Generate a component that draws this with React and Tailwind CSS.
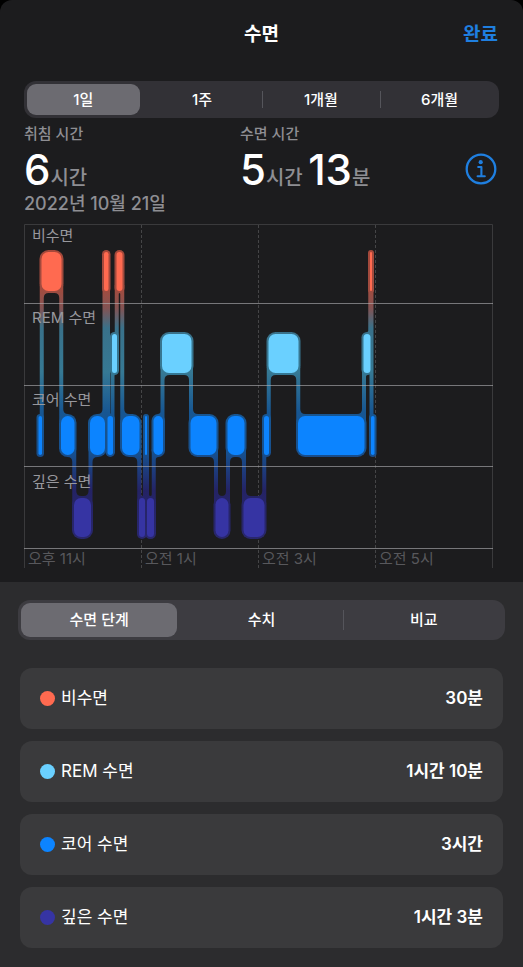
import { useState } from "react";

const ranges = ["1일", "1주", "1개월", "6개월"];
const tabs = ["수면 단계", "수치", "비교"];

const stages = [
  { id: "awake", name: "비수면", total: "30분", color: "#ff6a50", dot: "bg-[#ff6a50]" },
  { id: "rem", name: "REM 수면", total: "1시간 10분", color: "#6ad0ff", dot: "bg-[#6ad0ff]" },
  { id: "core", name: "코어 수면", total: "3시간", color: "#0c84ff", dot: "bg-[#0c84ff]" },
  { id: "deep", name: "깊은 수면", total: "1시간 3분", color: "#3634a3", dot: "bg-[#3634a3]" },
];

// [row, start, end]
const segments = [
  [2, 14.5, 18],
  [0, 17.5, 37.5],
  [2, 37, 50.5],
  [3, 50, 67],
  [2, 66, 81],
  [0, 80, 84.5],
  [2, 83.5, 89],
  [1, 88, 93],
  [0, 92.5, 98.5],
  [2, 98, 115.5],
  [3, 115, 121],
  [2, 121, 123],
  [3, 123, 130],
  [2, 129.5, 139],
  [1, 138, 167.5],
  [2, 166.5, 192.5],
  [3, 191.5, 204.5],
  [2, 203.5, 220.5],
  [3, 219.5, 240.5],
  [2, 240, 245],
  [1, 244.5, 274.5],
  [2, 274, 340.5],
  [1, 339.5, 346.5],
  [0, 346, 348],
  [2, 347, 350.5],
];

const hours = [
  { x: 0, label: "오후 11시" },
  { x: 117, label: "오전 1시" },
  { x: 234, label: "오전 3시" },
  { x: 351, label: "오전 5시" },
];

const ROW = 82;
const BAR = 39;
const EDGE = 2;

const barTop = (row) => 28 + row * ROW;

// Strip between two neighbouring bars, with rounded inner corners at both ends
function connector(a, b) {
  const x = (a[2] + b[1]) / 2;
  const goesDown = b[0] > a[0];
  const upper = goesDown ? a : b;
  const lower = goesDown ? b : a;
  const y1 = barTop(upper[0]) + BAR + EDGE;
  const y2 = barTop(lower[0]) - EDGE;
  const ru = Math.max(0, Math.min(5, (upper[2] - upper[1]) / 2 - EDGE));
  const rl = Math.max(0, Math.min(5, (lower[2] - lower[1]) / 2 - EDGE));
  const s = goesDown ? 1 : -1;
  const inner = x - s * EDGE;
  const outer = x + s * EDGE;

  return [
    `M${inner - s * ru} ${y1 - 1}`,
    `L${inner - s * ru} ${y1}`,
    `Q${inner} ${y1} ${inner} ${y1 + ru}`,
    `L${inner} ${y2 + 8}`,
    `L${outer + s * rl} ${y2 + 8}`,
    `L${outer + s * rl} ${y2}`,
    `Q${outer} ${y2} ${outer} ${y2 - rl}`,
    `L${outer} ${y1 - 8}`,
    `L${inner} ${y1 - 8}Z`,
  ].join(" ");
}

function SegmentedControl({ items, value, onChange, label, className }) {
  const active = items.indexOf(value);

  return (
    <div role="group" aria-label={label} className={`flex rounded-xl ${className}`}>
      {items.map((item, i) => (
        <button
          key={item}
          type="button"
          aria-pressed={value === item}
          onClick={() => onChange(item)}
          className="relative flex flex-1 p-[3px] text-[15px] leading-5 text-white"
        >
          {i > 0 && i !== active && i !== active + 1 && (
            <span className="absolute inset-y-2.5 left-0 w-px bg-[#55555b]" />
          )}
          <span
            className={`flex h-full w-full items-center justify-center rounded-[9px] font-medium ${
              value === item ? "bg-[#6c6b71]" : ""
            }`}
          >
            {item}
          </span>
        </button>
      ))}
    </div>
  );
}

function SleepChart() {
  return (
    <svg viewBox="0 0 475 346" className="block w-full" role="img" aria-label="수면 단계">
      <defs>
        <linearGradient id="edge" gradientUnits="userSpaceOnUse" x1="0" y1="26" x2="0" y2="316">
          <stop offset="0" stopColor="#a5483a" />
          <stop offset="0.14" stopColor="#a04c40" />
          <stop offset="0.2" stopColor="#835353" />
          <stop offset="0.27" stopColor="#39718a" />
          <stop offset="0.42" stopColor="#367994" />
          <stop offset="0.56" stopColor="#175692" />
          <stop offset="0.7" stopColor="#17508e" />
          <stop offset="0.83" stopColor="#242365" />
          <stop offset="1" stopColor="#29276d" />
        </linearGradient>
      </defs>

      {/* Frame and hour lines */}
      <path d="M0.5 344V0.5H468.5V344" fill="none" stroke="#3a3a3c" />
      {hours.slice(1).map((hour) => (
        <line
          key={hour.x}
          x1={hour.x + 0.5}
          x2={hour.x + 0.5}
          y1="1"
          y2="344"
          stroke="#454547"
          strokeDasharray="3 2"
        />
      ))}

      {/* Outlines and connectors */}
      <g fill="url(#edge)">
        {segments.map((seg, i) => (
          <rect
            key={i}
            x={seg[1] - EDGE}
            y={barTop(seg[0]) - EDGE}
            width={seg[2] - seg[1] + EDGE * 2}
            height={BAR + EDGE * 2}
            rx={Math.min(9, (seg[2] - seg[1]) / 2 + EDGE)}
          />
        ))}
        {segments.slice(1).map((seg, i) => (
          <path key={i} d={connector(segments[i], seg)} />
        ))}
      </g>

      {/* Bars */}
      {segments.map((seg, i) => (
        <rect
          key={i}
          x={seg[1]}
          y={barTop(seg[0])}
          width={seg[2] - seg[1]}
          height={BAR}
          rx={Math.min(7, (seg[2] - seg[1]) / 2)}
          fill={stages[seg[0]].color}
        />
      ))}

      {/* Row lines */}
      {[79, 161, 242, 324].map((y) => (
        <line key={y} x1="0" x2="469" y1={y + 0.5} y2={y + 0.5} stroke="#b4b4b8" strokeOpacity="0.6" />
      ))}

      {stages.map((stage, i) => (
        <text key={stage.id} x="8" y={17 + i * ROW} fontSize="15" fill="#98989d">
          {stage.name}
        </text>
      ))}
      {hours.map((hour) => (
        <text key={hour.x} x={hour.x + 4} y="340" fontSize="15" fill="#58585c">
          {hour.label}
        </text>
      ))}
    </svg>
  );
}

function InfoIcon() {
  return (
    <svg viewBox="0 0 32 32" className="size-8" fill="none" stroke="currentColor">
      <circle cx="16" cy="16" r="14.3" strokeWidth="2.3" />
      <circle cx="15.7" cy="9.2" r="2.1" fill="currentColor" stroke="none" />
      <path
        d="M13.2 14h3.2v9M12.6 23.2h7.2"
        strokeWidth="2.1"
        strokeLinecap="round"
        strokeLinejoin="round"
      />
    </svg>
  );
}

function App() {
  const [range, setRange] = useState("1일");
  const [tab, setTab] = useState("수면 단계");

  return (
    <div lang="ko" className="min-h-screen bg-black font-[Inter,'Noto_Sans_CJK_KR',sans-serif]">
      <div className="flex min-h-screen flex-col overflow-hidden rounded-t-xl bg-[#1c1c1e]">

        {/* Header */}
        <header className="grid h-[68px] grid-cols-3 items-center px-[25px] pt-[2px]">
          <h1 className="col-start-2 text-center text-[19px] font-bold text-white">수면</h1>
          <button type="button" className="justify-self-end text-[19px] font-bold text-[#1f7fe0]">
            완료
          </button>
        </header>

        <main className="px-6 pt-[13px] pb-3">
          <SegmentedControl
            items={ranges}
            value={range}
            onChange={setRange}
            label="기간"
            className="h-[37px] bg-[#323136]"
          />

          {/* Summary */}
          <div className="mt-[6px] flex items-center">
            <div className="w-[216px]">
              <p className="mb-[6px] text-[15px] leading-5 font-medium text-[#8e8e93]">취침 시간</p>
              <p className="text-[20px] leading-none font-medium text-[#8e8e93]">
                <span className="text-[42px] leading-10 text-white">6</span>시간
              </p>
            </div>
            <div className="flex-1">
              <p className="mb-[6px] text-[15px] leading-5 font-medium text-[#8e8e93]">수면 시간</p>
              <p className="text-[20px] leading-none font-medium text-[#8e8e93]">
                <span className="text-[42px] leading-10 text-white">5</span>시간{" "}
                <span className="text-[42px] leading-10 text-white">13</span>분
              </p>
            </div>
            <button type="button" aria-label="정보" className="mt-6 mr-[2px] text-[#1f7fe0]">
              <InfoIcon />
            </button>
          </div>
          <p className="mt-[2px] mb-2 text-[18px] leading-6 font-medium text-[#8e8e93]">
            2022년 10월 21일
          </p>

          <SleepChart />
        </main>

        {/* Stage details */}
        <section className="flex-1 bg-[#2c2c2e] px-[18px] py-[18px]">
          <SegmentedControl
            items={tabs}
            value={tab}
            onChange={setTab}
            label="보기"
            className="h-10 bg-[#3d3c41]"
          />

          <ul className="mt-7 flex flex-col gap-3 px-[2px]">
            {stages.map((stage) => (
              <li key={stage.id}>
                <button
                  type="button"
                  className="flex h-[61px] w-full items-center rounded-xl bg-[#3a3a3c] px-5 text-[17px] text-white"
                >
                  <span className={`mr-[6px] size-[15px] rounded-full ${stage.dot}`} />
                  <span>{stage.name}</span>
                  <span className="ml-auto font-semibold">{stage.total}</span>
                </button>
              </li>
            ))}
          </ul>
        </section>
      </div>
    </div>
  );
}

export default App;
